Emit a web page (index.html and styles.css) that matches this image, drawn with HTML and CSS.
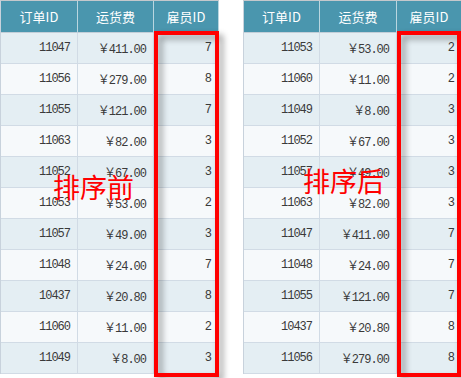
FILE: index.html
```html
<!DOCTYPE html>
<html lang="zh-CN">
<head>
<meta charset="utf-8">
<title>排序前后</title>
<link rel="stylesheet" href="styles.css">
</head>
<body>
<div class="page">
  <div class="panel">
    <div class="grid grid-left">
      <div class="hd">订单ID</div><div class="hd">运货费</div><div class="hd">雇员ID</div>
      <div class="c o">11047</div><div class="c o">￥411.00</div><div class="c o">7</div>
      <div class="c e">11056</div><div class="c e">￥279.00</div><div class="c e">8</div>
      <div class="c o">11055</div><div class="c o">￥121.00</div><div class="c o">7</div>
      <div class="c e">11063</div><div class="c e">￥82.00</div><div class="c e">3</div>
      <div class="c o">11052</div><div class="c o">￥67.00</div><div class="c o">3</div>
      <div class="c e">11053</div><div class="c e">￥53.00</div><div class="c e">2</div>
      <div class="c o">11057</div><div class="c o">￥49.00</div><div class="c o">3</div>
      <div class="c e">11048</div><div class="c e">￥24.00</div><div class="c e">7</div>
      <div class="c o">10437</div><div class="c o">￥20.80</div><div class="c o">8</div>
      <div class="c e">11060</div><div class="c e">￥11.00</div><div class="c e">2</div>
      <div class="c o">11049</div><div class="c o">￥8.00</div><div class="c o">3</div>
    </div>
    <div class="mark mark-left"></div>
    <div class="label label-left">排序前</div>
  </div>
  <div class="panel">
    <div class="grid grid-right">
      <div class="hd">订单ID</div><div class="hd">运货费</div><div class="hd">雇员ID</div>
      <div class="c o">11053</div><div class="c o">￥53.00</div><div class="c o">2</div>
      <div class="c e">11060</div><div class="c e">￥11.00</div><div class="c e">2</div>
      <div class="c o">11049</div><div class="c o">￥8.00</div><div class="c o">3</div>
      <div class="c e">11052</div><div class="c e">￥67.00</div><div class="c e">3</div>
      <div class="c o">11057</div><div class="c o">￥49.00</div><div class="c o">3</div>
      <div class="c e">11063</div><div class="c e">￥82.00</div><div class="c e">3</div>
      <div class="c o">11047</div><div class="c o">￥411.00</div><div class="c o">7</div>
      <div class="c e">11048</div><div class="c e">￥24.00</div><div class="c e">7</div>
      <div class="c o">11055</div><div class="c o">￥121.00</div><div class="c o">7</div>
      <div class="c e">10437</div><div class="c e">￥20.80</div><div class="c e">8</div>
      <div class="c o">11056</div><div class="c o">￥279.00</div><div class="c o">8</div>
    </div>
    <div class="mark mark-right"></div>
    <div class="label label-right">排序后</div>
  </div>
</div>
</body>
</html>
```
FILE: styles.css
```css
html, body {
  margin: 0;
  padding: 0;
  background: #ffffff;
  overflow: hidden;
}
.page {
  display: flex;
  gap: 24px;
  width: 461px;
  height: 378px;
}
.panel {
  position: relative;
  flex: none;
}
.grid {
  display: grid;
  border-left: 1px solid #c8d2dc;
  border-top: 1px solid #c4c8cc;
}
.grid-left { grid-template-columns: 77px 76px 65px; }
.grid-right { grid-template-columns: 76px 77px 65px; }
.hd {
  box-sizing: border-box;
  height: 32px;
  background: #4a96ae;
  color: #ffffff;
  border-right: 1px solid #b9d6e0;
  border-bottom: 1px solid #c3ced8;
  font-family: "Noto Sans CJK SC", "Liberation Sans", sans-serif;
  font-size: 13px;
  display: flex;
  align-items: center;
  justify-content: center;
}
.c {
  box-sizing: border-box;
  height: 31px;
  border-right: 1px solid #d1dbe5;
  border-bottom: 1px solid #d1dbe5;
  display: flex;
  align-items: center;
  justify-content: flex-end;
  padding-right: 7px;
  font-family: "Liberation Mono", "Noto Sans CJK SC", monospace;
  font-size: 12px;
  letter-spacing: -1px;
  color: #3a3a3a;
}
.o { background: #e4eef3; }
.e { background: #f6f9fb; }
.mark {
  position: absolute;
  top: 31px;
  left: 154px;
  height: 346px;
  box-sizing: border-box;
  border: 4px solid #ff0000;
  filter: drop-shadow(4px 4px 3px rgba(0, 0, 0, 0.4));
}
.mark-left { width: 65px; }
.mark-right { width: 64px; }
.label {
  position: absolute;
  font-family: "Noto Sans CJK SC", sans-serif;
  font-size: 27px;
  line-height: 27px;
  color: #ff0000;
  white-space: nowrap;
}
.label-left { left: 53px; top: 173px; }
.label-right { left: 60px; top: 167px; }
```
